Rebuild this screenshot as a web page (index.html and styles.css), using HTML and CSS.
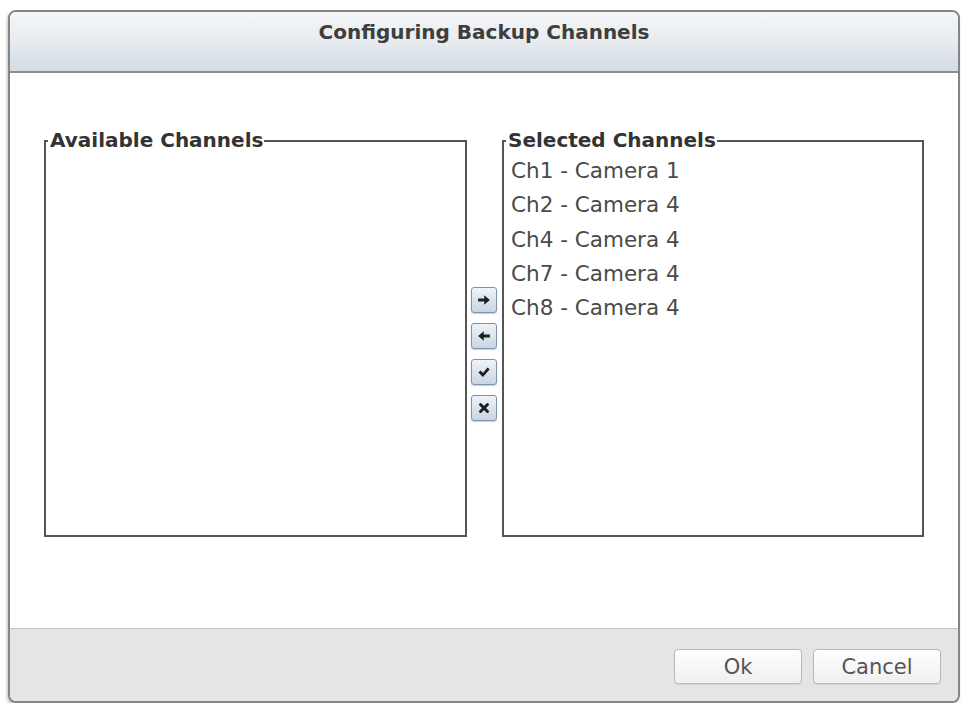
FILE: index.html
```html
<!DOCTYPE html>
<html>
<head>
<meta charset="utf-8">
<title>Configuring Backup Channels</title>
<link rel="stylesheet" href="styles.css">
</head>
<body>
<div class="dialog">
  <div class="dialog-header">Configuring Backup Channels</div>
  <div class="dialog-body">
    <fieldset class="panel">
      <legend>Available Channels</legend>
    </fieldset>
    <div class="mover">
      <button class="icon-btn" title="Add">
        <svg viewBox="0 0 12 12" width="14" height="14"><path d="M1 4.7h5.2V1.9l4.8 4.1-4.8 4.1V7.3H1z" fill="#1e1e1e"/></svg>
      </button>
      <button class="icon-btn" title="Remove">
        <svg viewBox="0 0 12 12" width="14" height="14"><path d="M11 4.7H5.8V1.9L1 6l4.8 4.1V7.3H11z" fill="#1e1e1e"/></svg>
      </button>
      <button class="icon-btn" title="Select all">
        <svg viewBox="0 0 12 12" width="14" height="14"><path d="M1.2 6.4l1.9-1.7 2 2.1 3.9-4.6 1.9 1.5-5.8 6.5z" fill="#1e1e1e"/></svg>
      </button>
      <button class="icon-btn" title="Clear">
        <svg viewBox="0 0 12 12" width="14" height="14"><path d="M3 3l6 6M9 3l-6 6" stroke="#1e1e1e" stroke-width="2.5" stroke-linecap="round"/></svg>
      </button>
    </div>
    <fieldset class="panel">
      <legend>Selected Channels</legend>
      <ul class="channel-list">
        <li>Ch1 - Camera 1</li>
        <li>Ch2 - Camera 4</li>
        <li>Ch4 - Camera 4</li>
        <li>Ch7 - Camera 4</li>
        <li>Ch8 - Camera 4</li>
      </ul>
    </fieldset>
  </div>
  <div class="dialog-footer">
    <button class="btn">Ok</button>
    <button class="btn">Cancel</button>
  </div>
</div>
</body>
</html>
```

FILE: styles.css
```css
html, body {
  margin: 0;
  padding: 0;
  background: #ffffff;
}

body {
  font-family: "DejaVu Sans", Verdana, sans-serif;
  color: #444;
}

.dialog {
  margin: 10px 0 0 8px;
  width: 952px;
  height: 693px;
  box-sizing: border-box;
  border: 2px solid #858585;
  border-radius: 8px;
  overflow: hidden;
  display: flex;
  flex-direction: column;
  background: #fff;
  box-shadow: -1px 2px 3px rgba(0, 0, 0, 0.25);
}

.dialog-header {
  height: 61px;
  box-sizing: border-box;
  padding-top: 8px;
  border-bottom: 2px solid #8e8e8e;
  background: linear-gradient(#f5f6f8, #e9edf1 45%, #d3dbe3);
  text-align: center;
  font-weight: bold;
  font-size: 20px;
  line-height: 24px;
  color: #3e3e3e;
}

.dialog-body {
  flex: 1;
  display: grid;
  grid-template-columns: 423px 35px 422px;
  align-items: start;
  padding: 56px 0 0 34px;
}

.panel {
  margin: 0;
  padding: 0;
  height: 408px;
  box-sizing: border-box;
  border: 2px solid #555;
  min-width: 0;
}

.panel legend {
  margin-left: 2px;
  padding: 0 1px 0 2px;
  font-weight: bold;
  font-size: 20px;
  line-height: 23px;
  color: #333;
}

.mover {
  display: flex;
  flex-direction: column;
  align-items: center;
  gap: 10px;
  padding-top: 158px;
}

.icon-btn {
  width: 26px;
  height: 26px;
  padding: 0;
  margin: 0 0 0 -1px;
  display: flex;
  align-items: center;
  justify-content: center;
  border: 1px solid #7d93ab;
  border-radius: 3px;
  background: linear-gradient(#eef3f8, #c9d6e3);
  box-shadow: 0 1px 1px rgba(0, 0, 0, 0.2);
}

.channel-list {
  list-style: none;
  margin: 0;
  padding: 2px 0 0 7px;
}

.channel-list li {
  font-size: 21.5px;
  line-height: 34.3px;
  color: #4a4a4a;
}

.dialog-footer {
  height: 73px;
  box-sizing: border-box;
  border-top: 1px solid #c4c4c4;
  background: #e5e5e5;
  display: flex;
  justify-content: flex-end;
  align-items: flex-start;
  gap: 11px;
  padding: 20px 17px 0 0;
}

.btn {
  width: 128px;
  height: 35px;
  margin: 0;
  padding: 0;
  border: 1px solid #b9b9b9;
  border-radius: 4px;
  background: linear-gradient(#ffffff, #efefef);
  font-family: "DejaVu Sans", Verdana, sans-serif;
  font-size: 21px;
  color: #555;
  box-shadow: 0 1px 1px rgba(0, 0, 0, 0.08);
}
```
